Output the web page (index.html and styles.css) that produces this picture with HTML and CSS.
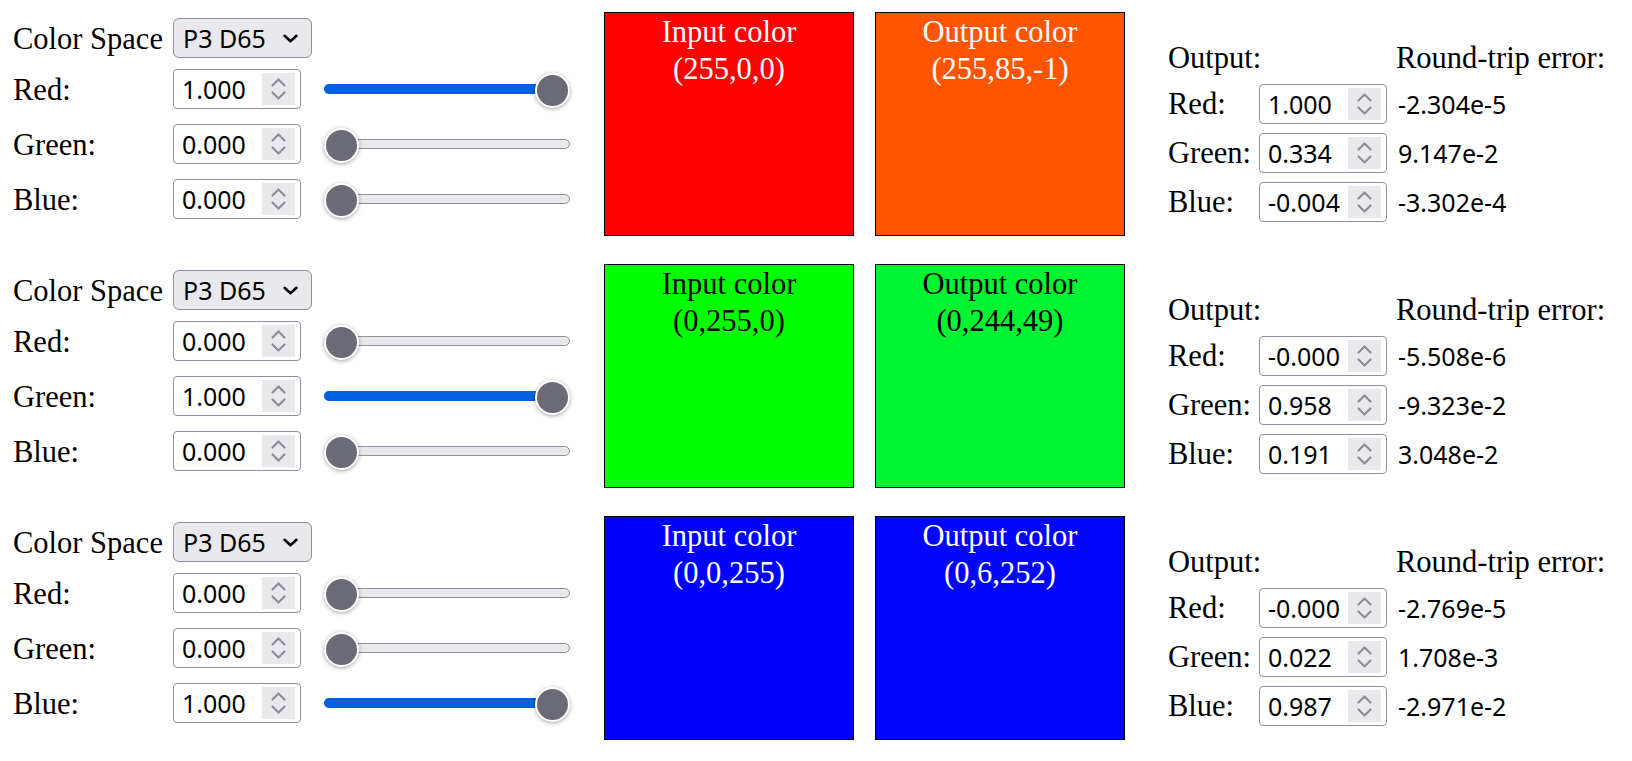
FILE: index.html
```html
<!DOCTYPE html>
<html lang="en">
<head>
<meta charset="utf-8">
<title>Color Space Round Trip</title>
<link rel="stylesheet" href="styles.css">
</head>
<body>
<svg class="defs" width="0" height="0" aria-hidden="true">
  <symbol id="spin" viewBox="0 0 33 32">
    <path d="M10.5 12.5 L16.5 6.5 L22.5 12.5" fill="none" stroke="#8d8d9a" stroke-width="2.2" stroke-linecap="round" stroke-linejoin="round"/>
    <path d="M10.5 19.5 L16.5 25.5 L22.5 19.5" fill="none" stroke="#8d8d9a" stroke-width="2.2" stroke-linecap="round" stroke-linejoin="round"/>
  </symbol>
  <symbol id="chev" viewBox="0 0 14 8">
    <path d="M1.5 1.5 L7 6.5 L12.5 1.5" fill="none" stroke="#000" stroke-width="2.4" stroke-linecap="round" stroke-linejoin="round"/>
  </symbol>
</svg>
<main class="page">

  <section class="conv">
    <div class="controls">
      <div class="crow head"><span class="lbl">Color Space</span><div class="select"><span>P3 D65</span><svg class="chev"><use href="#chev"/></svg></div></div>
      <div class="crow"><span class="lbl">Red:</span><div class="num"><span>1.000</span><svg class="spin"><use href="#spin"/></svg></div><div class="range"><div class="track"><div class="fill" style="--v:1"></div></div><div class="thumb" style="--v:1"></div></div></div>
      <div class="crow"><span class="lbl">Green:</span><div class="num"><span>0.000</span><svg class="spin"><use href="#spin"/></svg></div><div class="range"><div class="track"></div><div class="thumb" style="--v:0"></div></div></div>
      <div class="crow"><span class="lbl">Blue:</span><div class="num"><span>0.000</span><svg class="spin"><use href="#spin"/></svg></div><div class="range"><div class="track"></div><div class="thumb" style="--v:0"></div></div></div>
    </div>
    <div class="swatch sw-in light red">Input color<br>(255,0,0)</div>
    <div class="swatch sw-out light orange">Output color<br>(255,85,-1)</div>
    <div class="out">
      <span class="h">Output:</span><span></span><span class="h">Round-trip error:</span>
      <span class="rl">Red:</span><div class="num"><span>1.000</span><svg class="spin"><use href="#spin"/></svg></div><span class="err">-2.304e-5</span>
      <span class="rl">Green:</span><div class="num"><span>0.334</span><svg class="spin"><use href="#spin"/></svg></div><span class="err">9.147e-2</span>
      <span class="rl">Blue:</span><div class="num"><span>-0.004</span><svg class="spin"><use href="#spin"/></svg></div><span class="err">-3.302e-4</span>
    </div>
  </section>

  <section class="conv">
    <div class="controls">
      <div class="crow head"><span class="lbl">Color Space</span><div class="select"><span>P3 D65</span><svg class="chev"><use href="#chev"/></svg></div></div>
      <div class="crow"><span class="lbl">Red:</span><div class="num"><span>0.000</span><svg class="spin"><use href="#spin"/></svg></div><div class="range"><div class="track"></div><div class="thumb" style="--v:0"></div></div></div>
      <div class="crow"><span class="lbl">Green:</span><div class="num"><span>1.000</span><svg class="spin"><use href="#spin"/></svg></div><div class="range"><div class="track"><div class="fill" style="--v:1"></div></div><div class="thumb" style="--v:1"></div></div></div>
      <div class="crow"><span class="lbl">Blue:</span><div class="num"><span>0.000</span><svg class="spin"><use href="#spin"/></svg></div><div class="range"><div class="track"></div><div class="thumb" style="--v:0"></div></div></div>
    </div>
    <div class="swatch sw-in green">Input color<br>(0,255,0)</div>
    <div class="swatch sw-out green2">Output color<br>(0,244,49)</div>
    <div class="out">
      <span class="h">Output:</span><span></span><span class="h">Round-trip error:</span>
      <span class="rl">Red:</span><div class="num"><span>-0.000</span><svg class="spin"><use href="#spin"/></svg></div><span class="err">-5.508e-6</span>
      <span class="rl">Green:</span><div class="num"><span>0.958</span><svg class="spin"><use href="#spin"/></svg></div><span class="err">-9.323e-2</span>
      <span class="rl">Blue:</span><div class="num"><span>0.191</span><svg class="spin"><use href="#spin"/></svg></div><span class="err">3.048e-2</span>
    </div>
  </section>

  <section class="conv">
    <div class="controls">
      <div class="crow head"><span class="lbl">Color Space</span><div class="select"><span>P3 D65</span><svg class="chev"><use href="#chev"/></svg></div></div>
      <div class="crow"><span class="lbl">Red:</span><div class="num"><span>0.000</span><svg class="spin"><use href="#spin"/></svg></div><div class="range"><div class="track"></div><div class="thumb" style="--v:0"></div></div></div>
      <div class="crow"><span class="lbl">Green:</span><div class="num"><span>0.000</span><svg class="spin"><use href="#spin"/></svg></div><div class="range"><div class="track"></div><div class="thumb" style="--v:0"></div></div></div>
      <div class="crow"><span class="lbl">Blue:</span><div class="num"><span>1.000</span><svg class="spin"><use href="#spin"/></svg></div><div class="range"><div class="track"><div class="fill" style="--v:1"></div></div><div class="thumb" style="--v:1"></div></div></div>
    </div>
    <div class="swatch sw-in light blue">Input color<br>(0,0,255)</div>
    <div class="swatch sw-out light blue2">Output color<br>(0,6,252)</div>
    <div class="out">
      <span class="h">Output:</span><span></span><span class="h">Round-trip error:</span>
      <span class="rl">Red:</span><div class="num"><span>-0.000</span><svg class="spin"><use href="#spin"/></svg></div><span class="err">-2.769e-5</span>
      <span class="rl">Green:</span><div class="num"><span>0.022</span><svg class="spin"><use href="#spin"/></svg></div><span class="err">1.708e-3</span>
      <span class="rl">Blue:</span><div class="num"><span>0.987</span><svg class="spin"><use href="#spin"/></svg></div><span class="err">-2.971e-2</span>
    </div>
  </section>

</main>
</body>
</html>
```

FILE: styles.css
```css
* { box-sizing: border-box; }

body {
  margin: 0;
  background: #fff;
  color: #000;
  font-family: "Liberation Serif", "Times New Roman", serif;
  font-size: 30.5px;
}

.defs { position: absolute; width: 0; height: 0; overflow: hidden; }

.page {
  display: flex;
  flex-direction: column;
  gap: 28px;
  padding: 12px 0 0 13px;
}

.conv {
  display: flex;
  align-items: flex-start;
  height: 224px;
}

/* left controls */
.controls {
  display: flex;
  flex-direction: column;
  width: 557px;
  flex: none;
  padding-top: 6px;
}

.crow {
  display: flex;
  align-items: center;
  height: 40px;
  margin-top: 15px;
}

.crow.head {
  margin-top: 0;
  margin-bottom: -4px;
}

.lbl {
  width: 160px;
  flex: none;
  padding-top: 3px;
  white-space: nowrap;
}

.select {
  display: flex;
  align-items: center;
  justify-content: space-between;
  width: 139px;
  height: 40px;
  padding: 0 13px 0 9px;
  background: #e9e9ed;
  border: 1px solid #8f8f9d;
  border-radius: 6px;
  font-family: "Noto Sans", "Open Sans", sans-serif;
  font-size: 25px;
}

.chev { width: 15px; height: 9px; }

.num {
  position: relative;
  display: flex;
  align-items: center;
  width: 128px;
  height: 40px;
  flex: none;
  padding-left: 8px;
  border: 1px solid #8f8f9d;
  border-radius: 4px;
  background: #fff;
  font-family: "Noto Sans", "Open Sans", sans-serif;
  font-size: 25px;
}

.spin {
  position: absolute;
  right: 5px;
  top: 3px;
  width: 33px;
  height: 32px;
  background: #e9e9ed;
}

/* range slider */
.range {
  position: relative;
  display: flex;
  align-items: center;
  width: 246px;
  height: 40px;
  margin-left: 23px;
}

.track {
  position: relative;
  width: 100%;
  height: 10px;
  background: #e9e9ed;
  border: 1px solid #8f8f9d;
  border-radius: 5px;
}

.fill {
  position: absolute;
  left: -1px;
  top: -1px;
  bottom: -1px;
  width: calc(var(--v) * 211px + 18px);
  background: #0060df;
  border-radius: 5px;
}

.thumb {
  position: absolute;
  top: 50%;
  margin-top: -16px;
  left: calc(var(--v) * 211px);
  width: 35px;
  height: 35px;
  border-radius: 50%;
  background: #6b6b78;
  border: 2px solid #fff;
  box-shadow: 0 1px 4px rgba(0, 0, 0, 0.35);
}

/* swatches */
.swatch {
  width: 250px;
  height: 224px;
  flex: none;
  border: 1px solid #000;
  padding-top: 1px;
  text-align: center;
  line-height: 36.5px;
}

.sw-in { margin-left: 34px; }
.sw-out { margin-left: 21px; }

.light { color: #fff; }
.red { background: #ff0000; }
.orange { background: #ff5500; }
.green { background: #00ff00; }
.green2 { background: #00f431; }
.blue { background: #0000ff; }
.blue2 { background: #0006fc; }

/* output table */
.out {
  display: grid;
  grid-template-columns: 82px 128px auto;
  grid-template-rows: 34px 40px 40px 40px;
  column-gap: 9px;
  row-gap: 9px;
  align-items: center;
  margin-left: 43px;
  margin-top: 29px;
}

.h, .rl { white-space: nowrap; }

.err {
  font-family: "Noto Sans", "Open Sans", sans-serif;
  font-size: 25px;
  padding-left: 2px;
  white-space: nowrap;
}
```
